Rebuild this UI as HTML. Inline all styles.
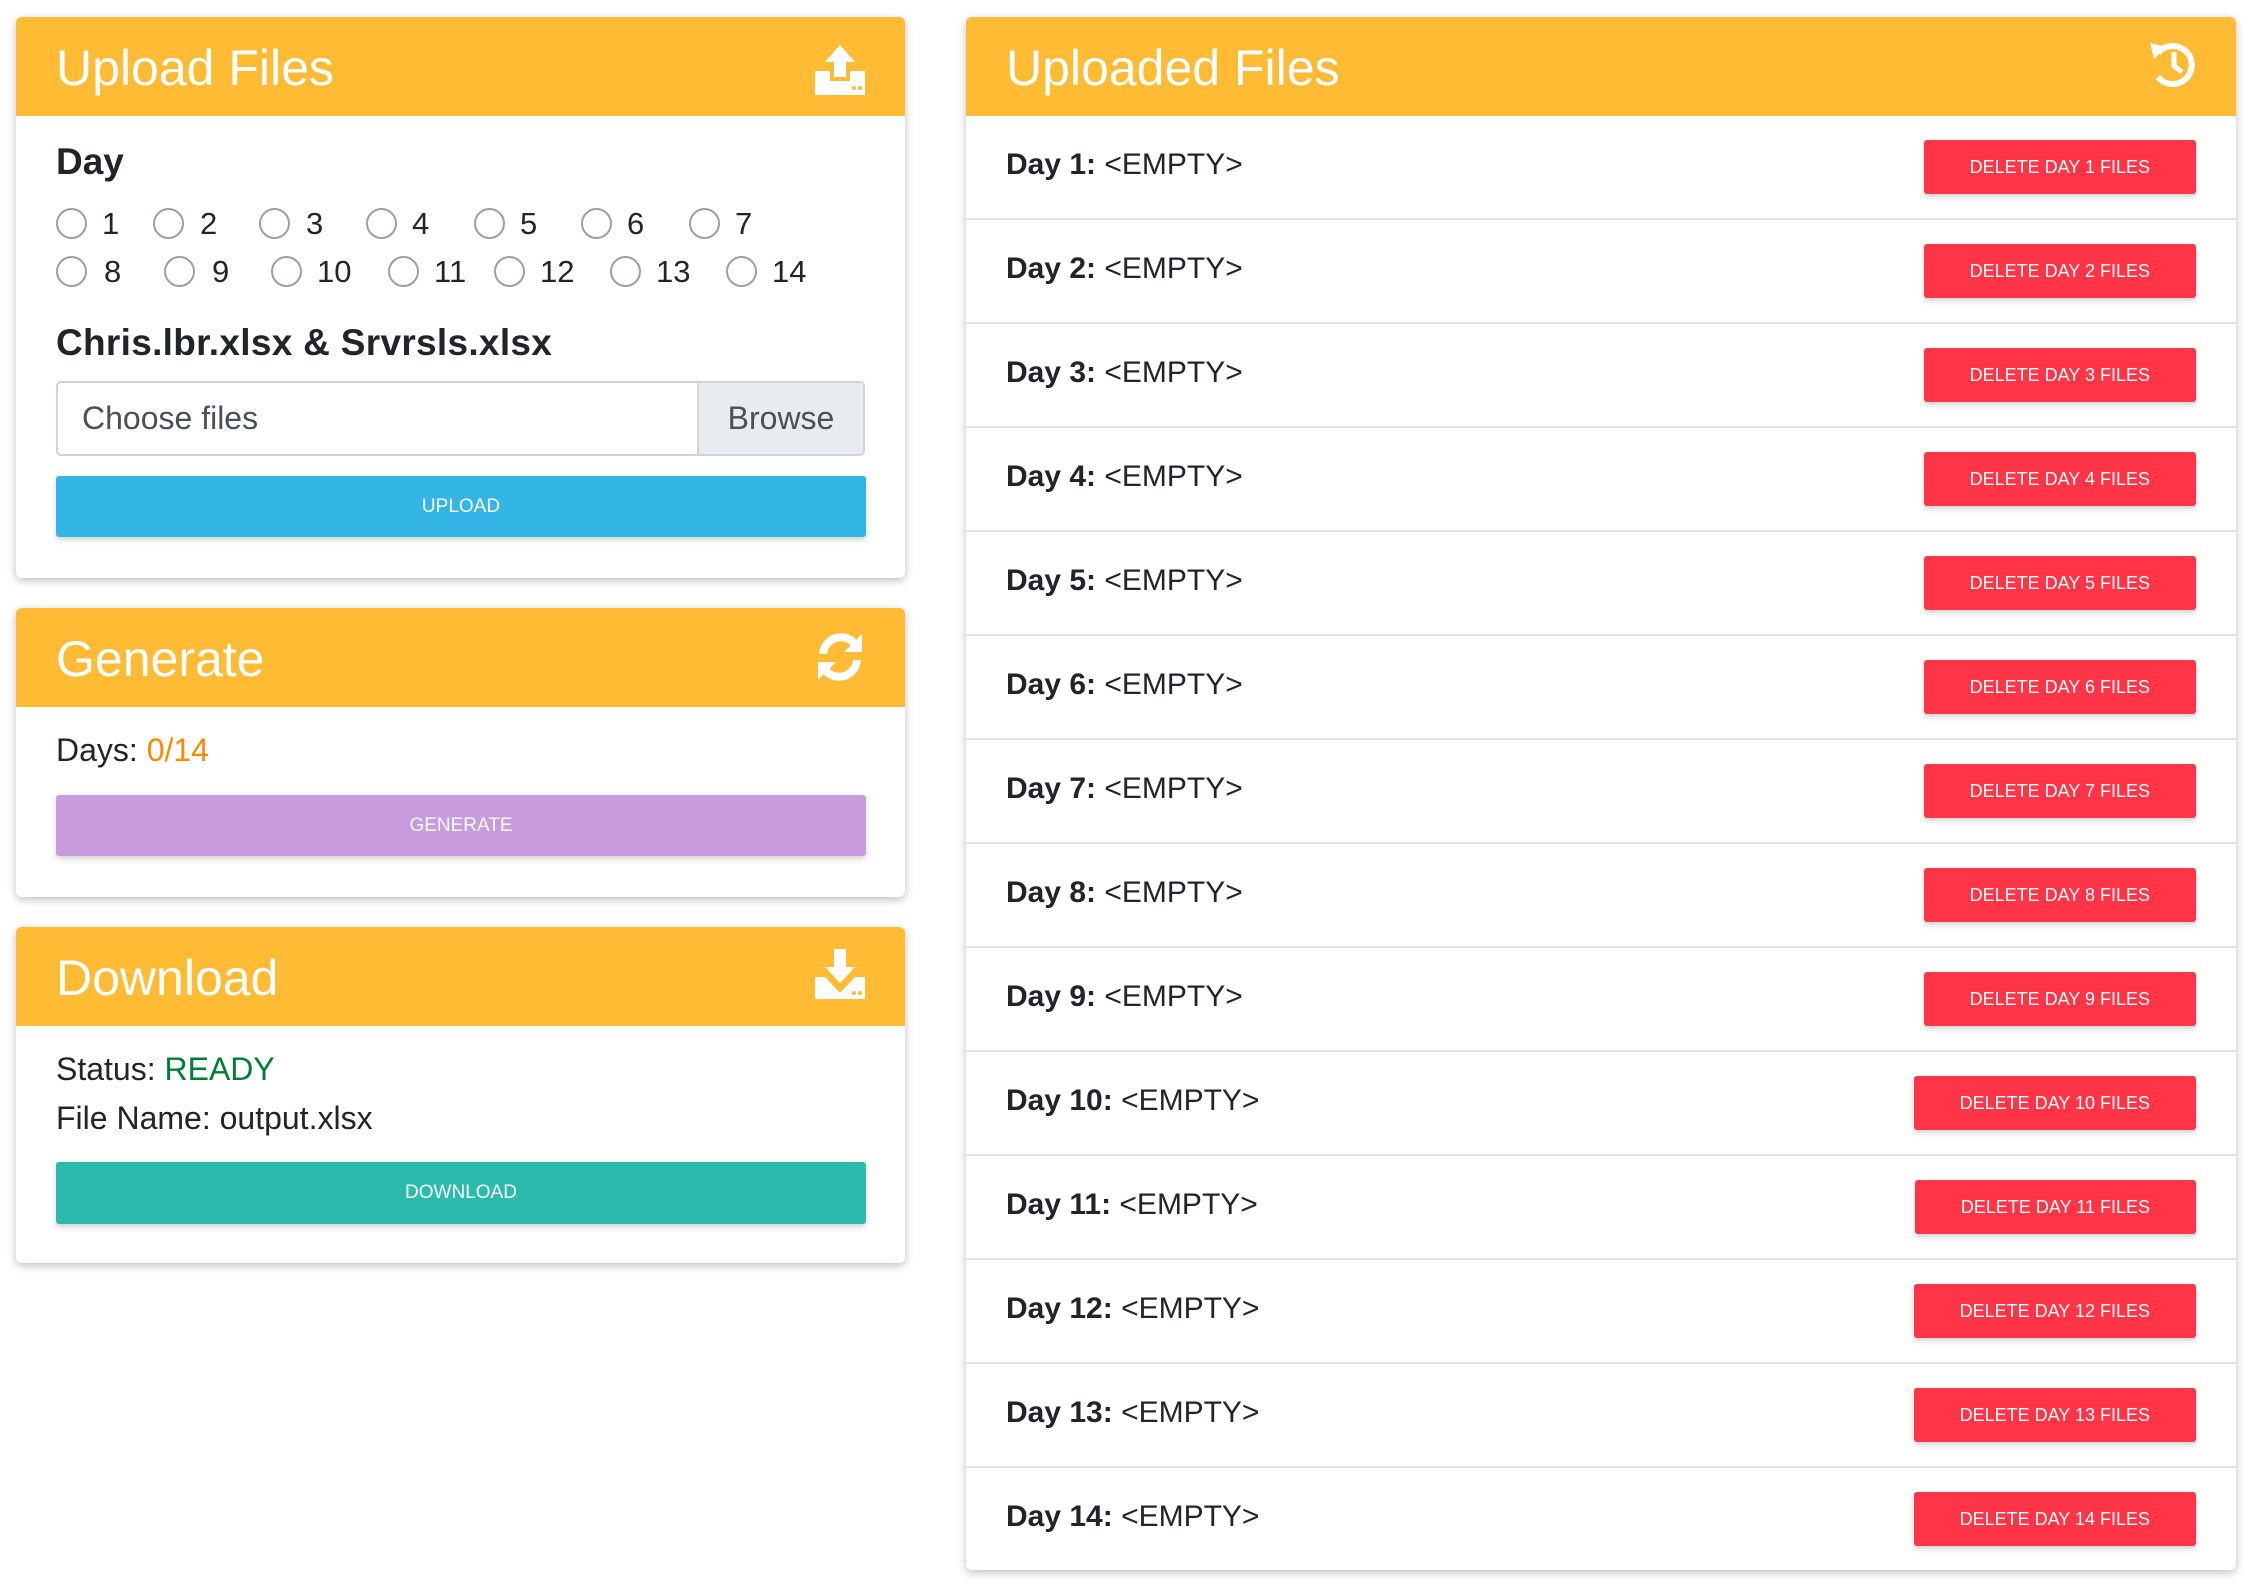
<!DOCTYPE html>
<html><head><style>
*{box-sizing:border-box;margin:0;padding:0}
body{width:2253px;height:1589px;background:#fff;font-family:"Liberation Sans",sans-serif;color:#212529;position:relative;overflow:hidden}
.card{position:absolute;background:#fff;border-radius:6px;box-shadow:0 3px 8px rgba(0,0,0,.18),0 2px 12px rgba(0,0,0,.08);overflow:hidden}
.hd{position:absolute;left:0;right:0;top:0;height:99px;background:#ffbb33;color:#fff;font-size:50px;font-weight:300;padding-left:40px;line-height:102px}
.hd svg{position:absolute;right:40px;top:28px}
.a{position:absolute}
.radio{position:absolute;width:31px;height:31px;border:2px solid #9aa0a6;border-radius:50%;background:#fff}
.num{position:absolute;font-size:31px;line-height:31px}
.btn{position:absolute;color:#fff;font-size:19px;text-align:center;border-radius:3px;box-shadow:0 3px 6px rgba(0,0,0,.18)}
.row{position:absolute;left:0;right:0;height:104px;border-bottom:2px solid #e2e2e2}
.row .t{position:absolute;left:40px;top:0;line-height:98px;font-size:30px}
.row .t b{font-weight:bold}
.row .del{position:absolute;right:40px;top:24px;height:54px;line-height:54px;background:#ff3547;color:#fff;font-size:18px;padding:0 46px;border-radius:3px;box-shadow:0 3px 6px rgba(0,0,0,.18)}
</style></head><body>

<div class="card" style="left:16px;top:17px;width:889px;height:561px">
 <div class="hd">Upload Files
  <svg width="50" height="50" viewBox="0 0 50 50"><path d="M25 0 L40 17 H31 V32 H19 V17 H10 Z" fill="#fff"/><path d="M0 26 H15 V36 H35 V26 H50 V50 H0 Z" fill="#fff"/><circle cx="39" cy="43" r="2" fill="#ffbb33"/><circle cx="45" cy="43" r="2" fill="#ffbb33"/></svg>
 </div>
 <div class="a" style="left:40px;top:124px;font-size:37px;font-weight:bold">Day</div>
</div>
<div class="a" style="left:56px;top:322px;font-size:37px;font-weight:bold;color:#212529;letter-spacing:0.3px">Chris.lbr.xlsx &amp; Srvrsls.xlsx</div>

<div class="radio" style="left:56px;top:208px"></div><div class="num" style="left:102px;top:208px">1</div>
<div class="radio" style="left:153px;top:208px"></div><div class="num" style="left:200px;top:208px">2</div>
<div class="radio" style="left:259px;top:208px"></div><div class="num" style="left:306px;top:208px">3</div>
<div class="radio" style="left:366px;top:208px"></div><div class="num" style="left:412px;top:208px">4</div>
<div class="radio" style="left:474px;top:208px"></div><div class="num" style="left:520px;top:208px">5</div>
<div class="radio" style="left:581px;top:208px"></div><div class="num" style="left:627px;top:208px">6</div>
<div class="radio" style="left:689px;top:208px"></div><div class="num" style="left:735px;top:208px">7</div>
<div class="radio" style="left:56px;top:256px"></div><div class="num" style="left:104px;top:256px">8</div>
<div class="radio" style="left:164px;top:256px"></div><div class="num" style="left:212px;top:256px">9</div>
<div class="radio" style="left:271px;top:256px"></div><div class="num" style="left:317px;top:256px">10</div>
<div class="radio" style="left:388px;top:256px"></div><div class="num" style="left:434px;top:256px">11</div>
<div class="radio" style="left:494px;top:256px"></div><div class="num" style="left:540px;top:256px">12</div>
<div class="radio" style="left:610px;top:256px"></div><div class="num" style="left:656px;top:256px">13</div>
<div class="radio" style="left:726px;top:256px"></div><div class="num" style="left:772px;top:256px">14</div>

<div class="a" style="left:56px;top:381px;width:809px;height:75px;border:2px solid #ced4da;border-radius:5px;background:#fff">
 <div class="a" style="left:24px;top:0;line-height:71px;font-size:32px;color:#495057">Choose files</div>
 <div class="a" style="right:0;top:0;width:166px;height:71px;background:#e9ecef;border-left:2px solid #ced4da;line-height:71px;text-align:center;font-size:32px;color:#495057">Browse</div>
</div>
<div class="btn" style="left:56px;top:476px;width:810px;height:61px;line-height:61px;background:#33b5e5">UPLOAD</div>

<div class="card" style="left:16px;top:608px;width:889px;height:289px">
 <div class="hd">Generate
  <svg width="50" height="50" viewBox="0 0 50 50" style="top:24px"><path d="M8 22 A18 18 0 0 1 40 12" stroke="#fff" stroke-width="8" fill="none"/><path d="M47 2 V20 H29 Z" fill="#fff"/><path d="M42 28 A18 18 0 0 1 10 38" stroke="#fff" stroke-width="8" fill="none"/><path d="M3 48 V30 H21 Z" fill="#fff"/></svg>
 </div>
 <div class="a" style="left:40px;top:124px;font-size:32px">Days: <span style="color:#ff8800">0/14</span></div>
</div>
<div class="btn" style="left:56px;top:795px;width:810px;height:61px;line-height:61px;background:#c89bdf">GENERATE</div>

<div class="card" style="left:16px;top:927px;width:889px;height:336px">
 <div class="hd">Download
  <svg width="50" height="50" viewBox="0 0 50 50" style="top:22px"><path d="M19 0 H31 V18 H40 L25 34 L10 18 H19 Z" fill="#fff"/><path d="M0 28 H10 L25 44 L40 28 H50 V50 H0 Z" fill="#fff"/><circle cx="39" cy="44" r="2" fill="#ffbb33"/><circle cx="45" cy="44" r="2" fill="#ffbb33"/></svg>
 </div>
 <div class="a" style="left:40px;top:124px;font-size:32px">Status: <span style="color:#007e33">READY</span></div>
 <div class="a" style="left:40px;top:173px;font-size:32px">File Name: output.xlsx</div>
</div>
<div class="btn" style="left:56px;top:1162px;width:810px;height:62px;line-height:62px;background:#2bbbad">DOWNLOAD</div>

<div class="card" style="left:966px;top:17px;width:1270px;height:1553px">
 <div class="hd" style="height:99px">Uploaded Files
  <svg width="50" height="50" viewBox="0 0 50 50" style="top:22px;right:38px"><path d="M10 14 A19 19 0 1 1 10 38" stroke="#fff" stroke-width="6" fill="none"/><path d="M2 4 L18 8 L6 20 Z" fill="#fff"/><path d="M26 13 V27 L34 33" stroke="#fff" stroke-width="5" fill="none"/></svg>
 </div>
 <div class="row" style="top:99px"><div class="t"><b>Day 1:</b> &lt;EMPTY&gt;</div><div class="del">DELETE DAY 1 FILES</div></div>
 <div class="row" style="top:203px"><div class="t"><b>Day 2:</b> &lt;EMPTY&gt;</div><div class="del">DELETE DAY 2 FILES</div></div>
 <div class="row" style="top:307px"><div class="t"><b>Day 3:</b> &lt;EMPTY&gt;</div><div class="del">DELETE DAY 3 FILES</div></div>
 <div class="row" style="top:411px"><div class="t"><b>Day 4:</b> &lt;EMPTY&gt;</div><div class="del">DELETE DAY 4 FILES</div></div>
 <div class="row" style="top:515px"><div class="t"><b>Day 5:</b> &lt;EMPTY&gt;</div><div class="del">DELETE DAY 5 FILES</div></div>
 <div class="row" style="top:619px"><div class="t"><b>Day 6:</b> &lt;EMPTY&gt;</div><div class="del">DELETE DAY 6 FILES</div></div>
 <div class="row" style="top:723px"><div class="t"><b>Day 7:</b> &lt;EMPTY&gt;</div><div class="del">DELETE DAY 7 FILES</div></div>
 <div class="row" style="top:827px"><div class="t"><b>Day 8:</b> &lt;EMPTY&gt;</div><div class="del">DELETE DAY 8 FILES</div></div>
 <div class="row" style="top:931px"><div class="t"><b>Day 9:</b> &lt;EMPTY&gt;</div><div class="del">DELETE DAY 9 FILES</div></div>
 <div class="row" style="top:1035px"><div class="t"><b>Day 10:</b> &lt;EMPTY&gt;</div><div class="del">DELETE DAY 10 FILES</div></div>
 <div class="row" style="top:1139px"><div class="t"><b>Day 11:</b> &lt;EMPTY&gt;</div><div class="del">DELETE DAY 11 FILES</div></div>
 <div class="row" style="top:1243px"><div class="t"><b>Day 12:</b> &lt;EMPTY&gt;</div><div class="del">DELETE DAY 12 FILES</div></div>
 <div class="row" style="top:1347px"><div class="t"><b>Day 13:</b> &lt;EMPTY&gt;</div><div class="del">DELETE DAY 13 FILES</div></div>
 <div class="row" style="top:1451px;border-bottom:none"><div class="t"><b>Day 14:</b> &lt;EMPTY&gt;</div><div class="del">DELETE DAY 14 FILES</div></div>
</div>
</body></html>
